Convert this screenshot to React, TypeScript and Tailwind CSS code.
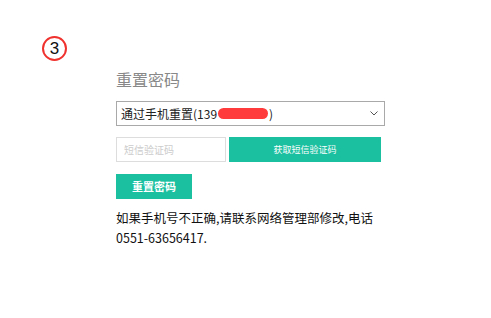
import React from 'react';

const App: React.FC = () => {
    return (
        <div
            className="w-[491px] h-[318px] bg-white relative"
            style={{ fontFamily: '"Microsoft YaHei", "Noto Sans CJK SC", sans-serif' }}
        >
            {/* step badge */}
            <div className="absolute left-[42px] top-[36px] w-[25px] h-[25px] rounded-full border-2 border-[#f0322f] flex items-center justify-center">
                <span className="text-[17px] leading-none text-[#111]" style={{ fontFamily: '"Liberation Sans", sans-serif' }}>3</span>
            </div>

            <div className="pl-[116px] pt-[68px] w-[385px] box-content">
                <h2 className="text-[16px] leading-[22px] text-[#888]">重置密码</h2>

                {/* 手机选择 */}
                <div className="mt-[11px] w-[269px] h-[25px] border border-[#a9a9a9] flex items-center justify-between pl-[4px] pr-[6px]">
                    <span className="text-[12px] text-[#222] flex items-center">
                        通过手机重置(139
                        <span className="inline-block w-[50px] h-[11px] rounded-full bg-[#ff3b3b] mx-[1px]" />
                        )
                    </span>
                    <svg width="8" height="5" viewBox="0 0 8 5" className="text-[#555]">
                        <path d="M0.5 0.5 L4 4 L7.5 0.5" fill="none" stroke="currentColor" strokeWidth="1" />
                    </svg>
                </div>

                {/* 验证码 */}
                <div className="mt-[11px] flex gap-[3px]">
                    <input
                        placeholder="短信验证码"
                        className="w-[110px] h-[25px] border border-[#ddd] px-[7px] text-[10px] placeholder:text-[#ccc] outline-none"
                    />
                    <button className="w-[152px] h-[25px] bg-[#1bc0a0] text-white text-[9px]">
                        获取短信验证码
                    </button>
                </div>

                <button className="mt-[12px] w-[76px] h-[25px] bg-[#1bc0a0] text-white text-[11px] font-bold">
                    重置密码
                </button>

                <p className="mt-[9px] w-[270px] text-[12.5px] leading-[20px] text-[#111]">
                    如果手机号不正确,请联系网络管理部修改,电话0551-63656417.
                </p>
            </div>
        </div>
    );
};

export default App;
